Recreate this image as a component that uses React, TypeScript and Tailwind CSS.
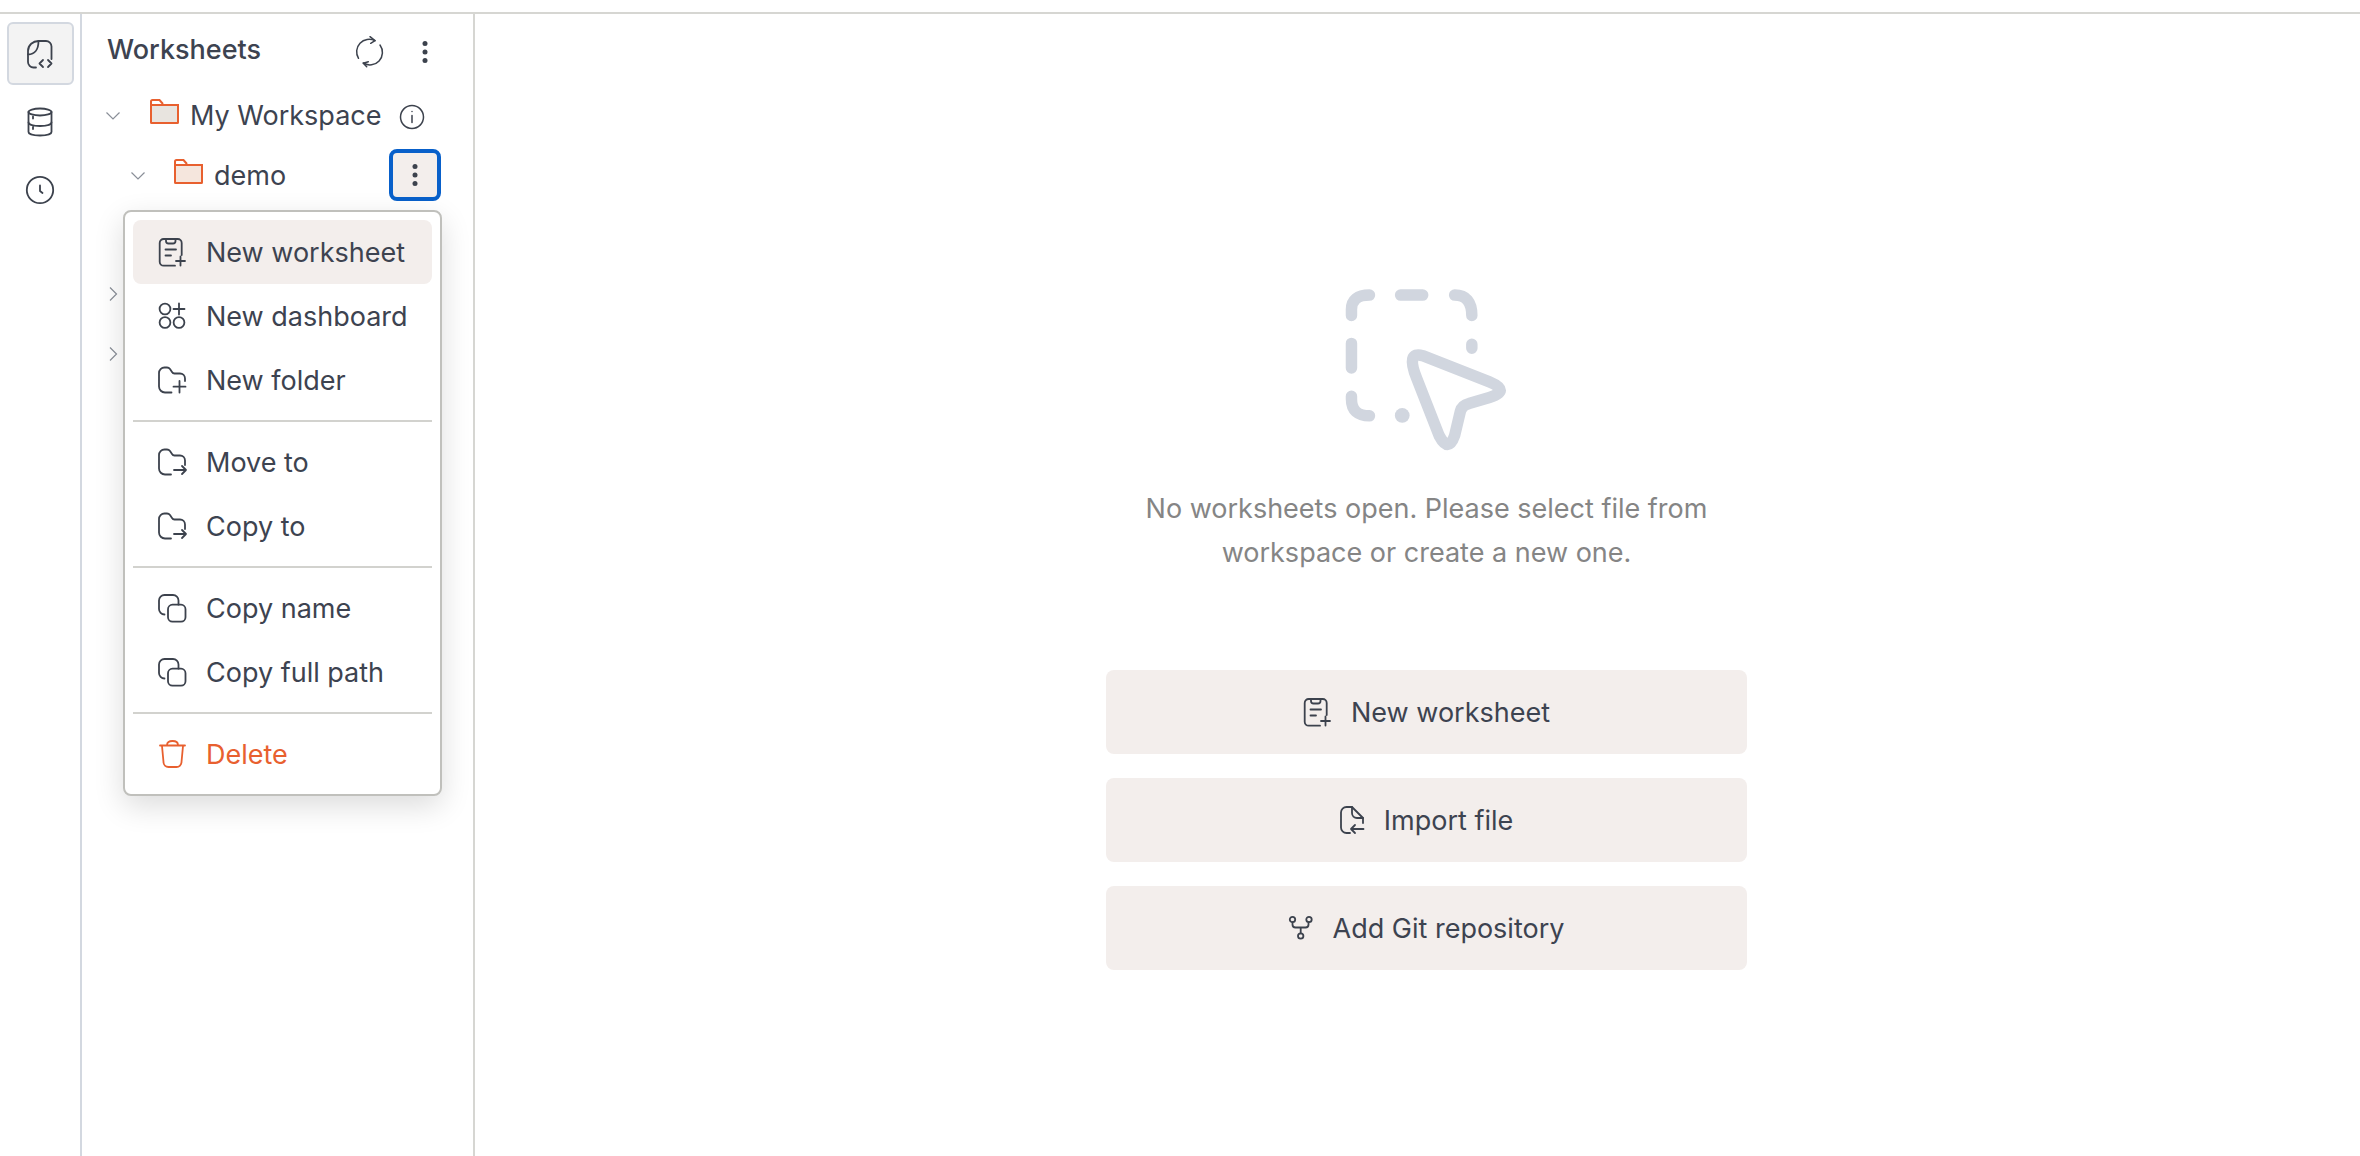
import type { ReactNode } from "react";

const orange = "#e8602f";

function Ico({ w = 28, h = 28, color = "#3c424d", sw = 1.8, children }: { w?: number; h?: number; color?: string; sw?: number; children: ReactNode }) {
  return (
    <svg width={w} height={h} viewBox={`0 0 ${w} ${h}`} fill="none" stroke={color} strokeWidth={sw} strokeLinecap="round" strokeLinejoin="round" className="shrink-0 overflow-visible">
      {children}
    </svg>
  );
}

const WorksheetIcon = () => (
  <Ico>
    <path d="M23.700 17V5a4 4 0 0 0-4-4H5.700a4 4 0 0 0-4 4v18.700a4 4 0 0 0 4 4H17" />
    <path d="M8 1v2a2.500 2.500 0 0 0 2.500 2.500H15A2.500 2.500 0 0 0 17.500 3V1" />
    <path d="M7.500 11.500H18M7.500 17.500H13M22.500 18.500v9M18 23h9" />
  </Ico>
);
const DashboardIcon = () => (
  <Ico>
    <circle cx="7" cy="7" r="5.400" />
    <circle cx="7" cy="20.500" r="5.400" />
    <circle cx="21" cy="20.500" r="5.400" />
    <path d="M21 1.500v11M15.500 7h11" />
  </Ico>
);
const folderOutline = "H7a6 6 0 0 1-6-6V7a5.500 5.500 0 0 1 5.500-5.500H9a4 4 0 0 1 3 1.500l2 3a3 3 0 0 0 2.500 1.500H22a5 5 0 0 1 5 5";
const FolderPlusIcon = () => (
  <Ico>
    <path d={`M13.500 26.500${folderOutline}V15`} />
    <path d="M21.500 15v11.500M15.500 20.700h12" />
  </Ico>
);
const FolderArrowIcon = () => (
  <Ico>
    <path d={`M13 26.500${folderOutline}V17`} />
    <path d="M16 22h12M24 18l4 4-4 4" />
  </Ico>
);
const CopyIcon = () => (
  <Ico>
    <path d="M6.500 20.500A5.500 5.500 0 0 1 1 15V6.500A5.500 5.500 0 0 1 6.500 1H15a5.500 5.500 0 0 1 5.500 5.500v4.200" />
    <rect x="10" y="10.700" width="17.500" height="17" rx="4.500" />
  </Ico>
);
const TrashIcon = () => (
  <Ico color={orange}>
    <path d="M2 5.500H27M9 5C9 2 11 1 14.500 1S20 2 20 5" />
    <path d="M4 6l1.500 16a5 5 0 0 0 5 5h8a5 5 0 0 0 5-5L25 6" />
  </Ico>
);
const ImportIcon = () => (
  <Ico w={24}>
    <path d="M10 27H6.500A5.500 5.500 0 0 1 1 21.500v-15A5.500 5.500 0 0 1 6.500 1H12l11 11v5" />
    <path d="M12 1v6a5 5 0 0 0 5 5h6" />
    <path d="M23.500 23H11M15 19l-4 4 4 4" />
  </Ico>
);
const GitIcon = () => (
  <Ico w={24} h={24}>
    <circle cx="3.500" cy="3.500" r="2.700" />
    <circle cx="20" cy="3.500" r="2.700" />
    <circle cx="11.700" cy="20" r="2.700" />
    <path d="M3.500 6.200V8.500a3 3 0 0 0 3 3h10a3 3 0 0 0 3-3V6.200M11.700 11.500v5.800" />
  </Ico>
);
const FileCodeIcon = () => (
  <Ico>
    <path d="M2 14.500V11C2 5 7 1 12.500 1H20a5.500 5.500 0 0 1 5.500 5.500V19" />
    <path d="M12.500 1C12.500 9 9 14.500 2 14.500V22a5.500 5.500 0 0 0 5.500 5.500H10" />
    <path d="M17 20l-3.500 3.500L17 27M22 20l3.500 3.500L22 27" />
  </Ico>
);
const DatabaseIcon = () => (
  <Ico>
    <ellipse cx="14" cy="4" rx="11.500" ry="3.500" />
    <path d="M2.500 4v20c0 2 5 3.500 11.500 3.500S25.500 26 25.500 24V4" />
    <path d="M2.500 14.500c0 2 5 3.500 11.500 3.500s11.500-1.500 11.500-3.500M7 8.500v2M7 19v2" />
  </Ico>
);
const ClockIcon = () => (
  <Ico>
    <circle cx="14" cy="14" r="13.200" />
    <path d="M14 9.500V15l2.500 2" />
  </Ico>
);
const RefreshIcon = () => (
  <Ico w={28} h={31} sw={1.500}>
    <path d="M3.500 22.300A12.500 12.500 0 0 1 20 4.700M25 9A12.500 12.500 0 0 1 8.300 27" />
    <path d="M15 .7l5 4-4.300 2.600M13.300 25.700l-5 1.600 3.400 3.400" />
  </Ico>
);
const InfoIcon = () => (
  <Ico w={24} h={24} sw={1.500}>
    <circle cx="12" cy="12" r="11.500" />
    <path d="M12 10.500v7M12 6.500v.1" />
  </Ico>
);
const Chevron = ({ right }: { right?: boolean }) => (
  <svg width="16" height="16" viewBox="0 0 16 16" fill="none" stroke="#8a8f98" strokeWidth="1.200" className="shrink-0">
    <path d={right ? "M5 1.500l6.500 6.500L5 14.500" : "M1.500 4.500L8 11l6.500-6.500"} />
  </svg>
);
const Folder = ({ fill }: { fill: string }) => (
  <svg width="29" height="25" viewBox="0 0 29 25" fill="none" stroke={orange} strokeWidth="2" className="shrink-0 mb-[7px]">
    <path d="M1 6h27v17.500a.5.500 0 0 1-.5.500H1.500a.5.500 0 0 1-.5-.5z" fill={fill} />
    <path d="M1 6V2.500A1.500 1.500 0 0 1 2.500 1h7L13 5" />
  </svg>
);
const Dots = () => (
  <svg width="8" height="24" viewBox="0 0 8 24" fill="#3c424d">
    <circle cx="4" cy="3.500" r="2.500" />
    <circle cx="4" cy="12" r="2.500" />
    <circle cx="4" cy="20.500" r="2.500" />
  </svg>
);

function MenuItem({ icon, label, active, danger }: { icon: ReactNode; label: string; active?: boolean; danger?: boolean }) {
  return (
    <div className={`flex h-[64px] items-center gap-[19px] rounded-lg pl-[24px] ${active ? "bg-[#f3eeec]" : ""} ${danger ? "text-[#e8602f]" : "text-[#3d4350]"}`}>
      <span className="flex w-[30px] justify-center">{icon}</span>
      <span className="pt-[2px]">{label}</span>
    </div>
  );
}

const Sep = () => <div className="my-[8px] h-[2px] bg-[#d2d2ce]" />;

function BigButton({ icon, label }: { icon: ReactNode; label: string }) {
  return (
    <button className="flex h-[84px] w-[641px] items-center justify-center gap-[20px] rounded-lg bg-[#f3eeec] text-[27px] text-[#3d4350]">
      {icon}
      <span className="pt-[2px]">{label}</span>
    </button>
  );
}

export default function App() {
  return (
    <div className="h-[1156px] overflow-hidden bg-white pt-[12px] font-['Inter',sans-serif]">
      <div className="flex h-full border-t-2 border-[#d6d6d2]">
        {/* icon rail */}
        <div className="flex w-[82px] shrink-0 flex-col items-center gap-[5px] border-r-2 border-[#d3d8e0] pt-[8px]">
          <div className="flex h-[63px] w-[67px] items-center justify-center rounded-md border-2 border-[#d3d8e0] bg-[#f3f3f3]">
            <FileCodeIcon />
          </div>
          <div className="flex h-[63px] w-[67px] items-center justify-center">
            <DatabaseIcon />
          </div>
          <div className="flex h-[63px] w-[67px] items-center justify-center">
            <ClockIcon />
          </div>
        </div>

        {/* worksheets tree */}
        <div className="relative w-[393px] shrink-0 border-r-2 border-[#d6d6d2] text-[#3d4350]">
          <div className="flex h-[71px] items-center pl-[25px] pt-[4px]">
            <span className="w-[155px] whitespace-nowrap pb-[2px] text-[27px] font-medium">Worksheets</span>
            <span className="ml-[93px] flex"><RefreshIcon /></span>
            <span className="ml-[38px] flex"><Dots /></span>
          </div>
          <div className="flex h-[60px] items-center pl-[23px] text-[27px]">
            <span className="flex pt-[2px]"><Chevron /></span>
            <span className="ml-[29px]"><Folder fill="#e8e4df" /></span>
            <span className="ml-[11px] pt-[3px]">My Workspace</span>
            <span className="ml-[18px] flex pt-[4px]"><InfoIcon /></span>
          </div>
          <div className="flex h-[60px] items-center pl-[48px] text-[27px]">
            <span className="flex pt-[2px]"><Chevron /></span>
            <span className="ml-[28px]"><Folder fill="#f5e6dd" /></span>
            <span className="ml-[11px] pt-[3px]">demo</span>
            <span className="ml-auto mr-[32px] flex h-[52px] w-[52px] items-center justify-center rounded-lg border-[4px] border-[#0860ca] bg-[#f3eeec]">
              <Dots />
            </span>
          </div>
          <div className="mt-[59px] flex h-[60px] items-center pl-[23px]"><Chevron right /></div>
          <div className="flex h-[60px] items-center pl-[23px]"><Chevron right /></div>

          {/* context menu */}
          <div className="absolute left-[41px] top-[196px] w-[319px] rounded-lg border-2 border-[#c0c0bc] bg-white p-[8px] text-[27px] shadow-[0_10px_30px_rgba(0,0,0,0.14)]">
            <MenuItem icon={<WorksheetIcon />} label="New worksheet" active />
            <MenuItem icon={<DashboardIcon />} label="New dashboard" />
            <MenuItem icon={<FolderPlusIcon />} label="New folder" />
            <Sep />
            <MenuItem icon={<FolderArrowIcon />} label="Move to" />
            <MenuItem icon={<FolderArrowIcon />} label="Copy to" />
            <Sep />
            <MenuItem icon={<CopyIcon />} label="Copy name" />
            <MenuItem icon={<CopyIcon />} label="Copy full path" />
            <Sep />
            <MenuItem icon={<TrashIcon />} label="Delete" danger />
          </div>
        </div>

        {/* empty state */}
        <div className="flex flex-1 flex-col items-center pl-[18px] pt-[270px]">
          <svg width="174" height="172" viewBox="540 32 425 420" fill="none" stroke="#d1d6df" strokeWidth="28" strokeLinecap="round" strokeLinejoin="round">
            <path d="M568 109V94Q568 59 612 59M688 59H742M820 59Q862 59 862 109M862 179V189M568 177V237M568 306V313Q568 354 612 354" />
            <circle cx="692" cy="353" r="18" fill="#d1d6df" stroke="none" />
            <path d="M742 207L905 271Q958 293 905 309L855 324Q838 328 834 343L820 402Q805 446 782 402L728 264Q700 195 742 207Z" />
          </svg>
          <p className="mt-[31px] w-[640px] text-center text-[27px] leading-[44px] text-[#858585]">
            No worksheets open. Please select file from
            <br />
            workspace or create a new one.
          </p>
          <div className="mt-[95px] flex flex-col gap-[24px]">
            <BigButton icon={<WorksheetIcon />} label="New worksheet" />
            <BigButton icon={<ImportIcon />} label="Import file" />
            <BigButton icon={<GitIcon />} label="Add Git repository" />
          </div>
        </div>
      </div>
    </div>
  );
}
